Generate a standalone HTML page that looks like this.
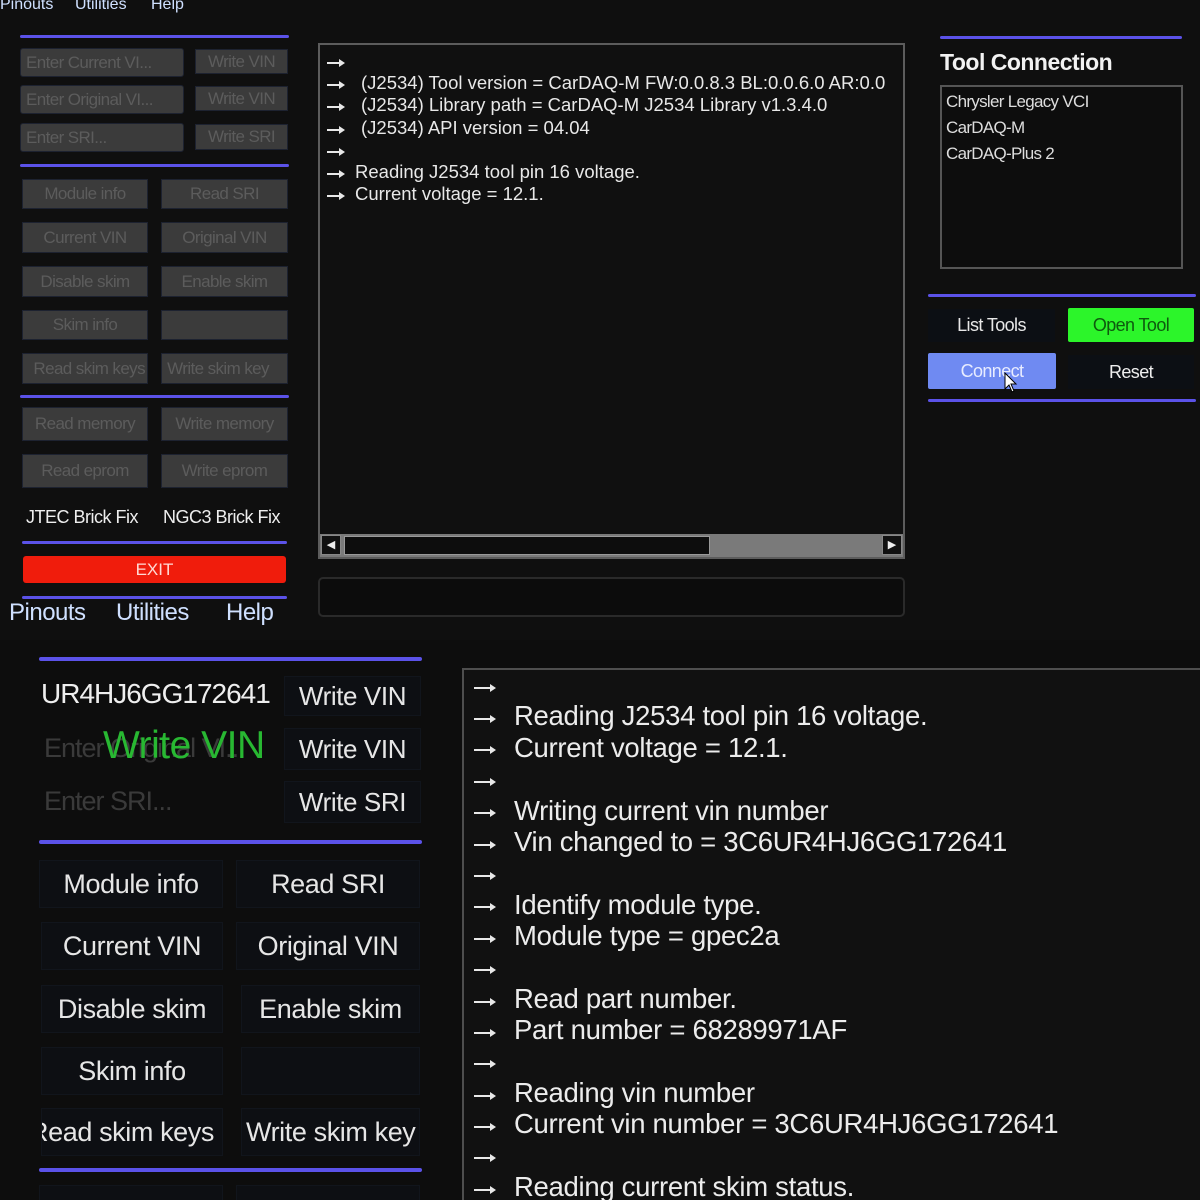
<!DOCTYPE html>
<html style="width:1200px;height:1200px;overflow:hidden"><head><meta charset="utf-8"><style>
*{margin:0;padding:0;box-sizing:border-box}
body{width:1200px;height:1200px;background:#0f0f0f;position:relative;overflow:hidden;font-family:"Liberation Sans",sans-serif;color:#e8e8e8}
.a{position:absolute;white-space:nowrap}
.ln{position:absolute;height:3px;background:#5b52e8;border-radius:2px}
.gb{position:absolute;background:#3b3b3b;color:#5c5c5c;font-size:17px;letter-spacing:-0.6px;display:flex;align-items:center;justify-content:center;overflow:hidden;white-space:nowrap;border:1px solid #1d2230}
.db{position:absolute;background:#0d0f13;color:#e6e6e6;font-size:27px;letter-spacing:-0.4px;display:flex;align-items:center;justify-content:center;overflow:hidden;white-space:nowrap;border:1px solid #11151c}
.log1 div{height:22.2px;font-size:18.5px;letter-spacing:0px;white-space:nowrap}
.log2 div{height:31.4px;font-size:27.5px;letter-spacing:-0.3px;white-space:nowrap}
.ar,.ar2{display:inline-block;position:relative}
.ar{width:36px}.ar2{width:42px}
.ar::before,.ar2::before{content:"";position:absolute;left:2px;top:55%;width:16px;height:2px;background:#e8e8e8}
.ar::after,.ar2::after{content:"";position:absolute;left:14px;top:55%;margin-top:-3px;border-left:6px solid #e8e8e8;border-top:4px solid transparent;border-bottom:4px solid transparent}
.ar2::before{width:20px}.ar2::after{left:18px}
</style></head><body>
<div class="a" style="left:0;top:-4px;font-size:16px;color:#cfe0ff">Pinouts</div>
<div class="a" style="left:75px;top:-4px;font-size:16px;color:#cfe0ff">Utilities</div>
<div class="a" style="left:151px;top:-4px;font-size:16px;color:#cfe0ff">Help</div>

<div class="ln" style="left:20px;top:35px;width:269px"></div>
<div class="gb" style="left:20px;top:48px;width:164px;height:29px;justify-content:flex-start;padding-left:5px;border-radius:3px">Enter Current VI...</div>
<div class="gb" style="left:195px;top:49px;width:93px;height:25px">Write VIN</div>
<div class="gb" style="left:20px;top:85px;width:164px;height:29px;justify-content:flex-start;padding-left:5px;border-radius:3px">Enter Original VI...</div>
<div class="gb" style="left:195px;top:86px;width:93px;height:25px">Write VIN</div>
<div class="gb" style="left:20px;top:123px;width:164px;height:29px;justify-content:flex-start;padding-left:5px;border-radius:3px">Enter SRI...</div>
<div class="gb" style="left:195px;top:124px;width:93px;height:26px">Write SRI</div>
<div class="ln" style="left:20px;top:164px;width:269px"></div>

<div class="gb" style="left:22px;top:179px;width:126px;height:30px">Module info</div>
<div class="gb" style="left:161px;top:179px;width:127px;height:30px">Read SRI</div>
<div class="gb" style="left:22px;top:222px;width:126px;height:31px">Current VIN</div>
<div class="gb" style="left:161px;top:222px;width:127px;height:31px">Original VIN</div>
<div class="gb" style="left:22px;top:266px;width:126px;height:31px">Disable skim</div>
<div class="gb" style="left:161px;top:266px;width:127px;height:31px">Enable skim</div>
<div class="gb" style="left:22px;top:310px;width:126px;height:30px">Skim info</div>
<div class="gb" style="left:161px;top:310px;width:127px;height:30px"></div>
<div class="gb" style="left:22px;top:353px;width:126px;height:31px;justify-content:flex-end;padding-right:2px">Read skim keys</div>
<div class="gb" style="left:161px;top:353px;width:127px;height:31px;justify-content:flex-start;padding-left:1px">&nbsp;Write skim key</div>
<div class="ln" style="left:20px;top:395px;width:269px"></div>
<div class="gb" style="left:22px;top:407px;width:126px;height:34px">Read memory</div>
<div class="gb" style="left:161px;top:407px;width:127px;height:34px">Write memory</div>
<div class="gb" style="left:22px;top:454px;width:126px;height:34px">Read eprom</div>
<div class="gb" style="left:161px;top:454px;width:127px;height:34px">Write eprom</div>
<div class="a" style="left:26px;top:507px;font-size:18px;letter-spacing:-0.5px;color:#eee">JTEC Brick Fix</div>
<div class="a" style="left:163px;top:507px;font-size:18px;letter-spacing:-0.5px;color:#eee;width:120px;overflow:hidden">NGC3 Brick Fix</div>
<div class="ln" style="left:22px;top:541px;width:265px"></div>
<div class="a" style="left:23px;top:556px;width:263px;height:27px;background:#f01c0c;border-radius:3px;color:#ffd9d4;font-size:17px;text-align:center;line-height:27px">EXIT</div>
<div class="ln" style="left:22px;top:596px;width:265px"></div>
<div class="a" style="left:9px;top:599px;font-size:24px;letter-spacing:-0.5px;color:#cfe0ff">Pinouts</div>
<div class="a" style="left:116px;top:599px;font-size:24px;letter-spacing:-0.5px;color:#cfe0ff">Utilities</div>
<div class="a" style="left:226px;top:599px;font-size:24px;letter-spacing:-0.5px;color:#cfe0ff">Help</div>

<div class="a" style="left:318px;top:43px;width:587px;height:516px;border:2px solid #5c5c5c;background:#101010;overflow:hidden">
 <div class="log1" style="position:absolute;left:5px;top:5px">
  <div><span class="ar">&nbsp;</span></div>
  <div><span class="ar">&nbsp;</span>(J2534) Tool version = CarDAQ-M FW:0.0.8.3 BL:0.0.6.0 AR:0.0</div>
  <div><span class="ar">&nbsp;</span>(J2534) Library path = CarDAQ-M J2534 Library v1.3.4.0</div>
  <div><span class="ar">&nbsp;</span>(J2534) API version = 04.04</div>
  <div><span class="ar">&nbsp;</span></div>
  <div><span class="ar" style="width:30px">&nbsp;</span>Reading J2534 tool pin 16 voltage.</div>
  <div><span class="ar" style="width:30px">&nbsp;</span>Current voltage = 12.1.</div>
 </div>
 <div style="position:absolute;left:0;bottom:0;width:100%;height:23px;background:#7a7a7a">
  <div style="position:absolute;left:1px;top:1px;width:20px;height:20px;background:#111;border:1px solid #888;color:#eee;font-size:11px;text-align:center;line-height:18px">◀</div>
  <div style="position:absolute;left:24px;top:2px;width:366px;height:19px;background:#0d0d0d;border:1px solid #999"></div>
  <div style="position:absolute;right:1px;top:1px;width:20px;height:20px;background:#111;border:1px solid #888;color:#eee;font-size:11px;text-align:center;line-height:18px">▶</div>
 </div>
</div>
<div class="a" style="left:318px;top:577px;width:587px;height:40px;border:2px solid #2a2a2a;border-radius:5px;background:#0c0c0c"></div>

<div class="ln" style="left:940px;top:36px;width:242px"></div>
<div class="a" style="left:940px;top:49px;font-size:23px;font-weight:bold;letter-spacing:-0.5px;color:#f2f2f2">Tool Connection</div>
<div class="a" style="left:940px;top:85px;width:243px;height:184px;border:2px solid #555;background:#0d0d0d;font-size:17px;letter-spacing:-0.7px;color:#ddd;padding:2px 0 0 4px;line-height:26px">Chrysler Legacy VCI<br>CarDAQ-M<br>CarDAQ-Plus 2</div>
<div class="ln" style="left:928px;top:294px;width:268px"></div>
<div class="a" style="left:928px;top:309px;width:127px;height:33px;background:#0c0f14;color:#e8e8e8;font-size:18px;letter-spacing:-0.6px;text-align:center;line-height:33px">List Tools</div>
<div class="a" style="left:1068px;top:308px;width:126px;height:34px;background:#2cf52a;color:#0e5a0e;font-size:18px;letter-spacing:-0.6px;text-align:center;line-height:34px;border-radius:2px">Open Tool</div>
<div class="a" style="left:928px;top:353px;width:128px;height:36px;background:#6f8af2;color:#e8ecff;font-size:18px;letter-spacing:-0.6px;text-align:center;line-height:36px;border-radius:2px">Connect</div>
<div class="a" style="left:1068px;top:355px;width:126px;height:34px;background:#0c0f14;color:#eee;font-size:18px;letter-spacing:-0.6px;text-align:center;line-height:34px">Reset</div>
<svg class="a" style="left:1004px;top:372px" width="14" height="22" viewBox="0 0 14 22"><path d="M1 1 L1 17 L5 13 L8 20 L10 19 L7 12 L12 12 Z" fill="#fff" stroke="#000" stroke-width="1"/></svg>
<div class="ln" style="left:928px;top:399px;width:268px"></div>

<div class="a" style="left:0;top:640px;width:1200px;height:560px;background:#0d0d0d"></div>
<div class="ln" style="left:39px;top:657px;width:383px;height:4px"></div>
<div class="a" style="left:41px;top:678px;font-size:28px;letter-spacing:-1px;color:#eee">UR4HJ6GG172641</div>
<div class="db" style="left:284px;top:676px;width:137px;height:40px;font-size:26px">Write VIN</div>
<div class="a" style="left:44px;top:733px;font-size:27px;letter-spacing:-1px;color:#3a3a3a">Enter Original VI...</div>
<div class="a" style="left:103px;top:724px;font-size:39px;letter-spacing:-0.5px;color:#28b832">Write VIN</div>
<div class="db" style="left:284px;top:728px;width:137px;height:42px;font-size:26px">Write VIN</div>
<div class="a" style="left:44px;top:786px;font-size:27px;letter-spacing:-1px;color:#3a3a3a">Enter SRI...</div>
<div class="db" style="left:284px;top:781px;width:137px;height:42px;font-size:26px">Write SRI</div>
<div class="ln" style="left:39px;top:840px;width:383px;height:4px"></div>
<div class="db" style="left:39px;top:860px;width:184px;height:48px">Module info</div>
<div class="db" style="left:236px;top:860px;width:184px;height:48px">Read SRI</div>
<div class="db" style="left:41px;top:922px;width:182px;height:48px">Current VIN</div>
<div class="db" style="left:236px;top:922px;width:184px;height:48px">Original VIN</div>
<div class="db" style="left:41px;top:985px;width:182px;height:48px">Disable skim</div>
<div class="db" style="left:241px;top:985px;width:179px;height:48px">Enable skim</div>
<div class="db" style="left:41px;top:1047px;width:182px;height:48px">Skim info</div>
<div class="db" style="left:241px;top:1047px;width:179px;height:48px"></div>
<div class="db" style="left:41px;top:1108px;width:182px;height:48px;justify-content:flex-end;padding-right:8px">Read skim keys</div>
<div class="db" style="left:241px;top:1108px;width:179px;height:48px;justify-content:flex-start;padding-left:4px">Write skim key</div>
<div class="ln" style="left:39px;top:1168px;width:383px;height:4px"></div>
<div class="db" style="left:39px;top:1185px;width:184px;height:48px"></div>
<div class="db" style="left:236px;top:1185px;width:184px;height:48px"></div>

<div class="a" style="left:462px;top:668px;width:760px;height:560px;border:2px solid #4e4e4e;background:#111;overflow:hidden">
 <div class="log2" style="position:absolute;left:8px;top:-1px;color:#ececec">
  <div><span class="ar2">&nbsp;</span></div>
  <div><span class="ar2">&nbsp;</span>Reading J2534 tool pin 16 voltage.</div>
  <div><span class="ar2">&nbsp;</span>Current voltage = 12.1.</div>
  <div><span class="ar2">&nbsp;</span></div>
  <div><span class="ar2">&nbsp;</span>Writing current vin number</div>
  <div><span class="ar2">&nbsp;</span>Vin changed to = 3C6UR4HJ6GG172641</div>
  <div><span class="ar2">&nbsp;</span></div>
  <div><span class="ar2">&nbsp;</span>Identify module type.</div>
  <div><span class="ar2">&nbsp;</span>Module type = gpec2a</div>
  <div><span class="ar2">&nbsp;</span></div>
  <div><span class="ar2">&nbsp;</span>Read part number.</div>
  <div><span class="ar2">&nbsp;</span>Part number = 68289971AF</div>
  <div><span class="ar2">&nbsp;</span></div>
  <div><span class="ar2">&nbsp;</span>Reading vin number</div>
  <div><span class="ar2">&nbsp;</span>Current vin number = 3C6UR4HJ6GG172641</div>
  <div><span class="ar2">&nbsp;</span></div>
  <div><span class="ar2">&nbsp;</span>Reading current skim status.</div>
 </div>
</div>
</body></html>
